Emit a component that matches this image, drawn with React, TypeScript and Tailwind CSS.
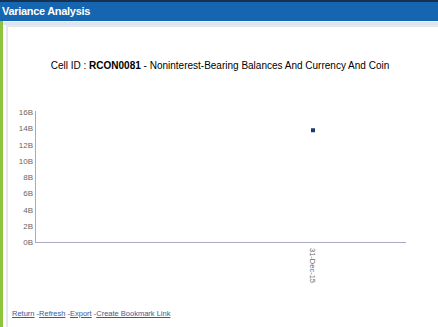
const Y_TICKS = [16, 14, 12, 10, 8, 6, 4, 2, 0];

const LINKS = ["Return", "Refresh", "Export", "Create Bookmark Link"];

function Chart() {
  // 0B sits on y=142, 16B on y=12
  const yFor = (v: number) => 142 - v * 8.125;
  return (
    <svg width="420" height="190" className="block">
      {Y_TICKS.map((v) => (
        <text
          key={v}
          x="25"
          y={yFor(v) + 3}
          textAnchor="end"
          fontSize="8"
          fill="#666"
          fontFamily="'Liberation Sans', Arial, sans-serif"
        >
          {v}B
        </text>
      ))}
      <line x1="27.5" y1="11" x2="27.5" y2="142.5" stroke="#a9a9c4" strokeWidth="1" />
      <line x1="27" y1="142.5" x2="398" y2="142.5" stroke="#a9a9c4" strokeWidth="1" />
      <rect x="303" y={yFor(14)} width="4" height="4" fill="#1f3a73" />
      <text
        x="302"
        y="148"
        fontSize="7.5"
        fill="#666"
        fontFamily="'Liberation Sans', Arial, sans-serif"
        transform="rotate(90 302 148)"
      >
        31-Dec-15
      </text>
    </svg>
  );
}

export default function App() {
  return (
    <div className="w-[438px] h-[327px] overflow-hidden bg-white flex flex-col font-['Liberation_Sans',Arial,sans-serif]">
      {/* title bar */}
      <div className="h-[21px] shrink-0 bg-[#1565b0] border-t-2 border-[#17324f] flex items-center px-[2px]">
        <span className="text-white font-bold text-[11px] tracking-[-0.3px]">Variance Analysis</span>
      </div>

      <div className="flex flex-1 min-h-0">
        <div className="w-[3px] bg-[#8cc43c] shrink-0" />
        <div className="flex-1 flex flex-col min-w-0">
          <div className="h-[4px] bg-[#dde6ef] border-t border-[#eef3f8] shrink-0" />
          <div className="flex-1 ml-[3px] border-l-2 border-t-2 border-[#e3e9ef] bg-white flex flex-col">
            <div className="mt-[31px] pr-[6px] text-center text-[10px] text-black whitespace-nowrap">
              Cell ID : <span className="font-bold">RCON0081</span> - Noninterest-Bearing Balances And Currency And Coin
            </div>
            <div className="mt-[27px]">
              <Chart />
            </div>
            <div className="mt-[18px] ml-[4px] flex items-center text-[7.5px] text-[#3b5998] whitespace-pre">
              {LINKS.map((l, i) => (
                <span key={l}>
                  {i > 0 && <span className="text-[#555]"> -</span>}
                  <a href="#" className="underline">{l}</a>
                </span>
              ))}
            </div>
          </div>
        </div>
      </div>
    </div>
  );
}
